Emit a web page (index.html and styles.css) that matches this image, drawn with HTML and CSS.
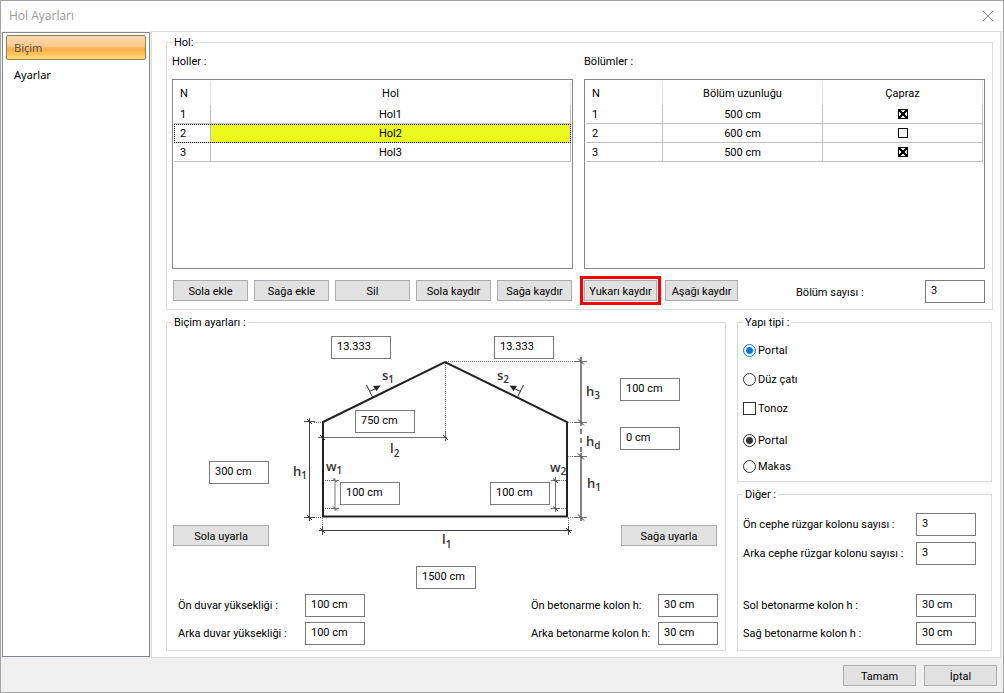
FILE: index.html
```html
<!DOCTYPE html>
<html lang="tr">
<head>
<meta charset="utf-8">
<title>Hol Ayarları</title>
<link rel="stylesheet" href="styles.css">
</head>
<body>
<div class="window">
  <header class="titlebar">
    <h1 class="title">Hol Ayarları</h1>
    <button class="close" type="button" aria-label="Kapat">
      <svg width="12" height="12" viewBox="0 0 12 12"><path d="M1 1L11 11M11 1L1 11" stroke="#8c8c8c" fill="none"/></svg>
    </button>
  </header>

  <div class="body">
    <nav class="sidebar">
      <button class="nav-item active" type="button">Biçim</button>
      <button class="nav-item" type="button">Ayarlar</button>
    </nav>

    <main class="main">
      <fieldset class="group">
        <legend>Hol:</legend>
        <div class="halls">
          <section class="hall-col">
            <h2 class="caption">Holler :</h2>
            <div class="listbox">
              <table class="list">
                <colgroup><col class="col-n-small"><col></colgroup>
                <thead><tr><th class="num">N</th><th>Hol</th></tr></thead>
                <tbody>
                  <tr><td class="num">1</td><td>Hol1</td></tr>
                  <tr class="selected"><td class="num">2</td><td>Hol2</td></tr>
                  <tr><td class="num">3</td><td>Hol3</td></tr>
                </tbody>
              </table>
            </div>
            <div class="actions">
              <button class="btn" type="button">Sola ekle</button>
              <button class="btn" type="button">Sağa ekle</button>
              <button class="btn" type="button">Sil</button>
              <button class="btn" type="button">Sola kaydır</button>
              <button class="btn" type="button">Sağa kaydır</button>
            </div>
          </section>
          <section class="hall-col">
            <h2 class="caption">Bölümler :</h2>
            <div class="listbox">
              <table class="list">
                <colgroup><col class="col-n"><col><col></colgroup>
                <thead><tr><th class="num">N</th><th>Bölüm uzunluğu</th><th>Çapraz</th></tr></thead>
                <tbody>
                  <tr><td class="num">1</td><td>500 cm</td><td><input class="cross" type="checkbox" aria-label="Çapraz 1" checked></td></tr>
                  <tr><td class="num">2</td><td>600 cm</td><td><input class="cross" type="checkbox" aria-label="Çapraz 2"></td></tr>
                  <tr><td class="num">3</td><td>500 cm</td><td><input class="cross" type="checkbox" aria-label="Çapraz 3" checked></td></tr>
                </tbody>
              </table>
            </div>
            <div class="row">
              <button class="btn small marked" type="button">Yukarı kaydır</button>
              <button class="btn small" type="button">Aşağı kaydır</button>
              <label class="count-label" for="count">Bölüm sayısı :</label>
              <input class="field" id="count" type="text" value="3">
            </div>
          </section>
        </div>
      </fieldset>

      <div class="lower">
        <fieldset class="group shape">
          <legend>Biçim ayarları :</legend>
          <div class="canvas">
            <svg class="drawing" width="558" height="260" viewBox="167 330 558 260" role="img" aria-label="Hol kesiti">
              <g fill="none" stroke="#707070">
                <path stroke-dasharray="1 1" d="M445.500 363V433M446 361.500H575M314 422.500H322M568 422.500H575M568 456.500H575M568 517.500H575M314 517.500H322M322.500 518V526M568.500 518V526M325 480.500H331M325 508.500H331M559 480.500H566M559 508.500H566"/>
                <path d="M322 437.500H447M445.500 432V441M318 437.500H328M331 480.500H339M331 508.500H339M551 480.500H560M551 508.500H560M575 361.500H587M575 422.500H587M575 456.500H587M575 517.500H587"/>
                <path stroke="#bdbdbd" stroke-width="2" d="M335 478V511"/>
                <path d="M555.500 477V512"/>
                <path stroke="#858585" stroke-width="2" d="M581 357V426M581 453V521"/>
                <path stroke="#858585" stroke-width="2" stroke-dasharray="5 4" d="M581 429V453"/>
                <path stroke="#444" d="M309.500 418V521M304 421.500H315M304 517.500H315M319 530.500H572M322.500 526V535M568.500 526V535"/>
                <path stroke="#333" d="M307 419L312 424M307 515L312 520M320 528L325 533M566 528L571 533M320 435L325 440M443 435L448 440M578 358.500L584 364.500M578 419.500L584 425.500M578 453.500L584 459.500M578 514.500L584 520.500M333 478.500L337 482.500M333 506.500L337 510.500M553 478.500L558 483M553 506.500L558 511"/>
                <path stroke="#222" stroke-width="2" d="M323 422L445 362L567 422V516.500H323Z"/>
                <path stroke="#333" d="M366.500 385L372.500 397M370 391L376 388.500M523.500 385L517.500 397M521 391.500L514 388.500"/>
              </g>
              <path fill="#222" d="M380.500 385.500L373 386L376.500 391ZM509.500 385.500L517 386L513.500 391Z"/>
              <g class="symbols">
                <text x="382" y="380">s<tspan class="sub" dy="3">1</tspan></text>
                <text x="497" y="380">s<tspan class="sub" dy="3">2</tspan></text>
                <text x="586" y="396">h<tspan class="sub" dy="3">3</tspan></text>
                <text x="586" y="446">h<tspan class="sub" dy="3">d</tspan></text>
                <text x="587" y="488">h<tspan class="sub" dy="3">1</tspan></text>
                <text x="293" y="476">h<tspan class="sub" dy="3">1</tspan></text>
                <text x="390" y="453">l<tspan class="sub" dy="4">2</tspan></text>
                <text x="442" y="544">l<tspan class="sub" dy="4">1</tspan></text>
                <text x="326" y="471">w<tspan class="sub" dy="3">1</tspan></text>
                <text x="550" y="472">w<tspan class="sub" dy="3">2</tspan></text>
              </g>
            </svg>
            <input class="field pin slope-left" type="text" aria-label="s1" value="13.333">
            <input class="field pin slope-right" type="text" aria-label="s2" value="13.333">
            <input class="field pin half-span" type="text" aria-label="l2" value="750 cm">
            <input class="field pin ridge" type="text" aria-label="h3" value="100 cm">
            <input class="field pin drop" type="text" aria-label="hd" value="0 cm">
            <input class="field pin height" type="text" aria-label="h1" value="300 cm">
            <input class="field pin wall-left" type="text" aria-label="w1" value="100 cm">
            <input class="field pin wall-right" type="text" aria-label="w2" value="100 cm">
            <input class="field pin span" type="text" aria-label="l1" value="1500 cm">
            <button class="btn pin fit-left" type="button">Sola uyarla</button>
            <button class="btn pin fit-right" type="button">Sağa uyarla</button>
          </div>
          <div class="walls">
            <label for="w-front">Ön duvar yüksekliği :</label>
            <input class="field" id="w-front" type="text" value="100 cm">
            <label class="second" for="c-front">Ön betonarme kolon h:</label>
            <input class="field" id="c-front" type="text" value="30 cm">
            <label for="w-back">Arka duvar yüksekliği :</label>
            <input class="field" id="w-back" type="text" value="100 cm">
            <label class="second" for="c-back">Arka betonarme kolon h:</label>
            <input class="field" id="c-back" type="text" value="30 cm">
          </div>
        </fieldset>

        <div class="side">
          <fieldset class="group type">
            <legend>Yapı tipi :</legend>
            <div class="options">
              <label class="option"><input class="radio" type="radio" name="roof" checked>Portal</label>
              <label class="option"><input class="radio" type="radio" name="roof">Düz çatı</label>
              <label class="option"><input class="check" type="checkbox">Tonoz</label>
            </div>
            <div class="options frame">
              <label class="option"><input class="radio dark" type="radio" name="frame" checked>Portal</label>
              <label class="option"><input class="radio dark" type="radio" name="frame">Makas</label>
            </div>
          </fieldset>
          <fieldset class="group">
            <legend>Diğer :</legend>
            <div class="other">
              <label for="o1">Ön cephe rüzgar kolonu sayısı :</label>
              <input class="field" id="o1" type="text" value="3">
              <label for="o2">Arka cephe rüzgar kolonu sayısı :</label>
              <input class="field" id="o2" type="text" value="3">
            </div>
            <div class="other columns">
              <label for="o3">Sol betonarme kolon h :</label>
              <input class="field" id="o3" type="text" value="30 cm">
              <label for="o4">Sağ betonarme kolon h :</label>
              <input class="field" id="o4" type="text" value="30 cm">
            </div>
          </fieldset>
        </div>
      </div>
    </main>
  </div>

  <footer class="footer">
    <button class="btn small" type="button">Tamam</button>
    <button class="btn small" type="button">İptal</button>
  </footer>
</div>
</body>
</html>
```
FILE: styles.css
```css
* { box-sizing: border-box; }

body {
  margin: 0;
  font: 11px/16px Roboto, "Noto Sans", sans-serif;
  color: #000;
}

button, input { font: inherit; color: inherit; margin: 0; }

.window {
  display: flex;
  flex-direction: column;
  min-height: 100vh;
  border: 1px solid #a6a6a6;
  background: #f0f0f0;
}

.titlebar {
  display: flex;
  align-items: center;
  justify-content: space-between;
  height: 30px;
  padding: 0 9px 0 8px;
  background: #fff;
}
.title { margin: 0; font: 12px/16px "Open Sans", "Noto Sans", sans-serif; color: #999; }
.close { display: flex; padding: 0; border: 0; background: none; }

.body { display: flex; flex: 1; gap: 1px; padding: 0 2px 0 1px; }

.sidebar {
  display: flex;
  flex-direction: column;
  gap: 2px;
  width: 148px;
  margin-top: 1px;
  margin-bottom: 1px;
  padding: 2px 3px;
  border: 1px solid #828790;
  background: #fff;
  font-family: "Noto Sans", "Open Sans", sans-serif;
}
.nav-item {
  height: 25px;
  padding: 0 7px;
  border: 1px solid transparent;
  border-radius: 2px;
  background: none;
  text-align: left;
}
.nav-item.active {
  border-color: #9a7f4e;
  background: linear-gradient(#fcd9b3, #fbc98a 45%, #f8ae4c 56%, #fbc55c 80%, #fedd78);
  color: #555;
}

.main {
  flex: 1;
  padding: 2px 7px 6px 14px;
  border: 1px solid #dcdcdc;
  background: #fff;
}

.group {
  min-width: 0;
  margin: 0;
  padding: 0 5px 5px;
  border: 1px solid #dcdcdc;
}
.group legend { padding: 2px 2px 0; line-height: 14px; }

.halls { display: grid; grid-template-columns: 1fr 1fr; gap: 11px; padding: 4px 2px 0 0; }
.caption { margin: 0 0 9px; font-size: 11px; font-weight: normal; }
.listbox { min-height: 190px; padding: 1px; border: 1px solid #828790; }

.list { width: 100%; border-collapse: separate; border-spacing: 0; table-layout: fixed; }
.col-n-small { width: 37px; }
.col-n { width: 77px; }
.list th, .list td { padding: 2px 0 0; text-align: center; font-weight: normal; }
.list th { height: 24px; border-right: 1px solid #e5e5e5; }
.list td { height: 19px; border-right: 1px solid #c0c0c0; border-bottom: 1px solid #c0c0c0; }
.list .num { padding-left: 6px; text-align: left; }
.selected { outline: 1px dotted #000; outline-offset: -1px; }
.selected td + td { background: #ecfa1e; }

.cross {
  display: block;
  appearance: none;
  width: 10px;
  height: 10px;
  margin: 0 auto 2px;
  border: 1px solid #000;
  background: #fff;
}
.cross:checked {
  background:
    linear-gradient(45deg, transparent 41%, #000 41% 59%, transparent 59%),
    linear-gradient(135deg, transparent 41%, #000 41% 59%, transparent 59%);
}

.btn {
  height: 21px;
  padding: 2px 0 0;
  border: 1px solid #adadad;
  background: #e1e1e1;
  line-height: 16px;
  white-space: nowrap;
}
.btn.small { width: 73px; }
.btn.marked { outline: 3px solid #fb0007; outline-offset: 1px; }

.actions { display: grid; grid-template-columns: repeat(5, 75px); gap: 6px; margin-top: 11px; padding-left: 1px; }
.row { display: flex; gap: 8px; height: 24px; margin-top: 11px; }
.count-label { width: 121px; margin-left: auto; line-height: 26px; }

.field {
  width: 60px;
  height: 23px;
  padding: 0 5px 3px;
  border: 1px solid #7a7a7a;
  background: #fff;
}

.lower { display: grid; grid-template-columns: 1fr 255px; gap: 11px; margin-top: 4px; padding-right: 1px; }
.shape { padding: 0 0 5px; }
.shape legend { margin-left: 5px; }

.canvas { position: relative; width: 558px; height: 264px; margin: 0 auto; }
.drawing { display: block; }
.symbols { font: 600 13px "Open Sans", sans-serif; fill: #333; }
.sub { font-size: 10px; }
.pin { position: absolute; }
.slope-left { left: 164px; top: 6px; }
.slope-right { left: 327px; top: 6px; }
.half-span { left: 188px; top: 80px; }
.ridge { left: 453px; top: 48px; }
.drop { left: 453px; top: 97px; }
.height { left: 42px; top: 131px; }
.wall-left { left: 173px; top: 152px; }
.wall-right { left: 323px; top: 152px; }
.span { left: 249px; top: 236px; }
.fit-left { left: 6px; top: 195px; width: 96px; }
.fit-right { left: 454px; top: 195px; width: 96px; }

.walls {
  display: grid;
  grid-template-columns: 127px 60px 1fr 127px 60px;
  align-items: center;
  row-gap: 5px;
  padding: 0 7px 0 11px;
  white-space: nowrap;
}
.second { grid-column: 4; }

.side { display: flex; flex-direction: column; gap: 4px; }
.type { flex: 1; padding-top: 13px; }
.options { display: grid; gap: 13px; }
.options.frame { gap: 10px; margin-top: 16px; }
.option { display: flex; align-items: center; gap: 2px; }
.radio, .check {
  appearance: none;
  width: 13px;
  height: 13px;
  margin-bottom: 2px;
  border: 1px solid #333;
  background: #fff;
}
.radio { border-radius: 50%; }
.radio:checked { border-color: #0078d7; background: radial-gradient(circle, #0078d7 3px, #fff 4px); }
.radio.dark:checked { border-color: #333; background: radial-gradient(circle, #333 3px, #fff 4px); }

.other {
  display: grid;
  grid-template-columns: 1fr 60px;
  align-items: center;
  gap: 6px 0;
  padding: 11px 10px 0 0;
  white-space: nowrap;
}
.other.columns { row-gap: 5px; padding-top: 29px; }

.footer { display: flex; justify-content: flex-end; gap: 8px; padding: 7px 6px 6px; }
```
